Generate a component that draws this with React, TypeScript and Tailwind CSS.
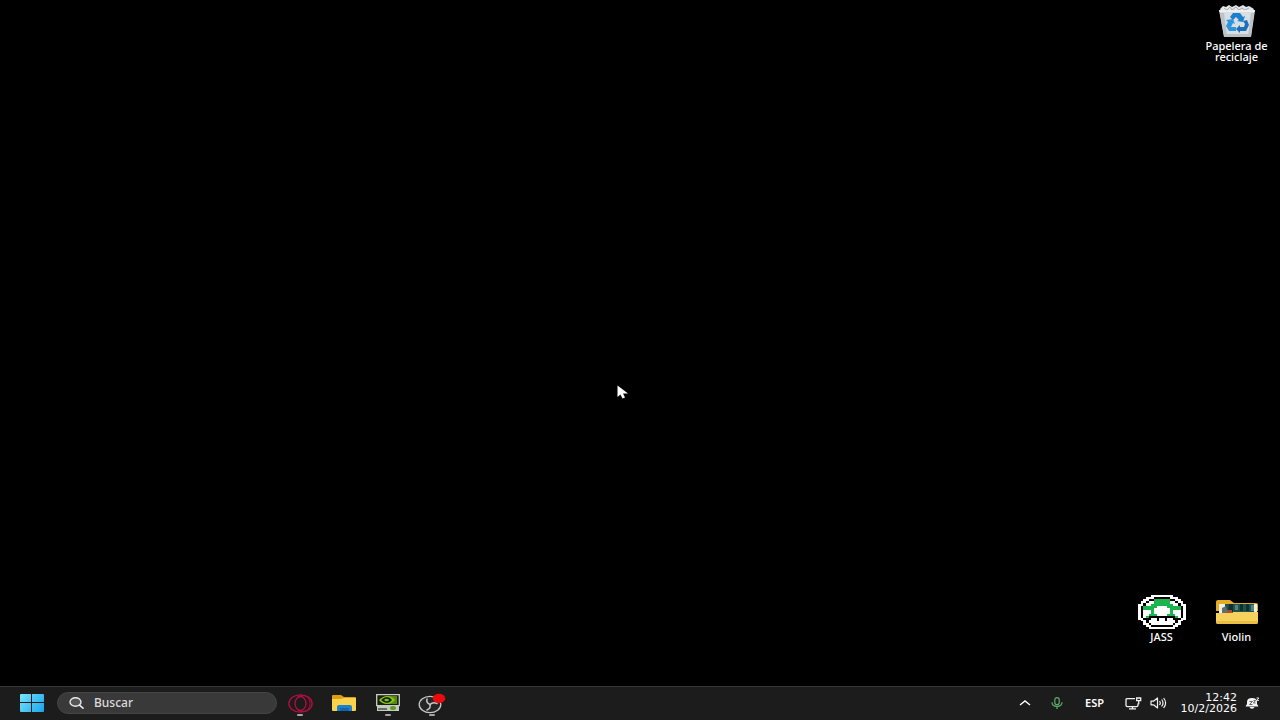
import React from "react";

const MUSHROOM = [
  ".....KKKKKK.....",
  "...KKGGGGGGKK...",
  "..KWWGGGGGGWWK..",
  ".KWWWGGGGGGWWWK.",
  ".KWWGGGGGGGGWWK.",
  "KGGGGGWWWWGGGGGK",
  "KGGGGWWWWWWGGGGK",
  "KWWWGWWWWWWGWWWK",
  "KWWWGWWWWWWGWWWK",
  "KWWGGGWWWWGGGWWK",
  "KWGKKKKKKKKKKGWK",
  ".KKKWWKWWKWWKKK.",
  "..KWWWKWWKWWWK..",
  "..KWWWWWWWWWWK..",
  "...KWWWWWWWWK...",
  "....KKKKKKKK....",
];

const FILL: Record<string, string> = { K: "#000", W: "#fff", G: "#1bb54e" };

function MushroomIcon() {
  const cells = MUSHROOM.flatMap((row, y) =>
    row.split("").map((c, x) => ({ c, x: x + 1, y: y + 1 })),
  ).filter((p) => p.c !== ".");
  return (
    <svg width="48" height="34" viewBox="0 0 18 18" preserveAspectRatio="none" shapeRendering="crispEdges">
      {cells.map((p) => (
        <rect key={`o${p.x}-${p.y}`} x={p.x - 1} y={p.y - 1} width="3" height="3" fill="#fff" />
      ))}
      {cells.map((p) => (
        <rect key={`c${p.x}-${p.y}`} x={p.x} y={p.y} width="1" height="1" fill={FILL[p.c]} />
      ))}
    </svg>
  );
}

function RecycleBinIcon() {
  return (
    <svg width="38" height="34" viewBox="0 0 38 34">
      <path d="M2 5 5 2l3 1 3-2 3 2 4-2 3 2 4-2 3 2 3-1 5 3-2 4H4Z" fill="#e4e7e9" />
      <path d="m6 4 3 2 3-3 2 3 4-3 3 3 3-2 3 2 4-2" fill="none" stroke="#a3aaae" />
      <path d="M1 6h36l-4 27H6Z" fill="#d9dee1" />
      <path d="M1 6h36l-.3 2H1.300Z" fill="#eceff0" />
      <path d="m2 9 4 23h3L6 9ZM36 9l-3 23h-3l3-23Z" fill="#bcc3c8" />
      <path d="M6 30h27v3H6Z" fill="#b9bfc3" />
      <path d="m12 13 3-4h7l3 4 2-1-2 6-6-1 2-1-3-3-3 3Z" fill="#1c7fcd" />
      <path d="m8 16 7-1 2 5-2-1-2 4h5v4h-7l-3-5 2-4Z" fill="#2f95de" />
      <path d="m25 17 4-1 2 5-3 6h-6v2l-4-4 4-4v2h4l1-3Z" fill="#1971ba" />
    </svg>
  );
}

function ViolinIcon() {
  return (
    <svg width="44" height="26" viewBox="0 0 44 26">
      <path d="M1 3q0-2 2-2h12l4 3h22q2 0 2 2v6H1Z" fill="#e5ac25" />
      <path d="M4 5h38v12H4Z" fill="#efefe6" />
      <path d="M10 5h29v8H10Z" fill="#20514d" />
      <path d="M20 6h3v5h-3ZM36 6h3v6h-3Z" fill="#4f8583" />
      <path d="M14 5h4v9h-5ZM25 5h3v7h-3ZM31 5h3v7h-3Z" fill="#10302d" />
      <path d="m7 9 4-2 1 4 2 3H7Z" fill="#5d6f72" />
      <path d="M12 11h5v3h-5Z" fill="#b3472d" />
      <path d="M1 14h15l4-1h23v10q0 2-2 2H3q-2 0-2-2Z" fill="#f6d15c" />
      <path d="M1 22h42v1q0 2-2 2H3q-2 0-2-2Z" fill="#eabd45" />
    </svg>
  );
}

function StartIcon() {
  return (
    <svg width="24" height="18" viewBox="0 0 24 18">
      <defs>
        <linearGradient id="win" x1="0" y1="0" x2="24" y2="18" gradientUnits="userSpaceOnUse">
          <stop offset="0" stopColor="#7ce4fb" />
          <stop offset="1" stopColor="#17a4ea" />
        </linearGradient>
      </defs>
      <path d="M0 1q0-1 1-1h10v8H0ZM12 0h11q1 0 1 1v7H12ZM0 9h11v9H1q-1 0-1-1ZM12 9h12v8q0 1-1 1H12Z" fill="url(#win)" />
    </svg>
  );
}

function SearchIcon() {
  return (
    <svg className="shrink-0" width="15" height="12" viewBox="0 0 15 12" fill="none" stroke="#e8e8e8">
      <ellipse cx="6.500" cy="5" rx="5.500" ry="4.300" strokeWidth="1.400" fill="#555" />
      <path d="m10.500 8.200 3.500 3" strokeWidth="1.600" strokeLinecap="round" />
    </svg>
  );
}

function OperaIcon() {
  return (
    <svg width="25" height="19" viewBox="0 0 25 19" fill="none" stroke="#b50d43" strokeWidth="1.300">
      <ellipse cx="12.500" cy="9.500" rx="11.600" ry="8.700" />
      <ellipse cx="12.500" cy="9.500" rx="5.500" ry="7" />
      <path d="M9 3.500Q12 .8 16 1.600c4 1 6 4.400 6 7.900s-2 7-6 7.900q-4 .8-7-1.900" strokeWidth=".9" />
    </svg>
  );
}

function ExplorerIcon() {
  return (
    <svg width="26" height="18" viewBox="0 0 26 18">
      <path d="M1 2q0-1 1-1h8l3 2h11q1 0 1 1v5H1Z" fill="#dc9e13" />
      <path d="M1 5h9l3-1h12v12q0 1-1 1H2q-1 0-1-1Z" fill="#fbd24b" />
      <path d="M6 17v-4q0-2 2-2h11q2 0 2 2v4Z" fill="#1b80cd" />
      <path d="M9 14h9v3H9Z" fill="#0f68ae" />
    </svg>
  );
}

function NvidiaIcon() {
  return (
    <svg width="24" height="18" viewBox="0 0 24 18">
      <path d="M.7.7h22.600v11H.7Z" fill="#18220f" stroke="#c9cdc7" strokeWidth="1.300" />
      <path d="M10 2h11v8H10Z" fill="#568b0e" />
      <path d="M3 6q4-4 8-4 5 0 8 4-4 4-8 4-5 0-8-4Z" fill="#8ac621" />
      <path d="M5 6q3-3 6-3t5 3q-2 3-5 3T5 6Z" fill="#162509" />
      <path d="M8 6q2-2 4-1 2 1 0 2-2 1-4-1Z" fill="#83c21c" />
      <path d="M1 12h22v5H1Z" fill="#c3cabf" />
      <path d="M2 14h9v2H2Z" fill="#677064" />
      <ellipse cx="17" cy="14" rx="3" ry="2" fill="#5b9d1f" />
    </svg>
  );
}

function ObsIcon() {
  return (
    <svg width="28" height="21" viewBox="0 0 28 21">
      <ellipse cx="12" cy="11.500" rx="10.800" ry="8.200" fill="#252526" stroke="#c8c8c8" strokeWidth="1.300" />
      <g fill="none" stroke="#c8c8c8" strokeWidth="1.500" strokeLinecap="round">
        <path d="M12 11.500Q8 10 9 6" />
        <path d="M12 11.500q3-3 7-1" />
        <path d="M12 11.500q1 4-3 5.500" />
      </g>
      <ellipse cx="21" cy="5.500" rx="6.300" ry="4.700" fill="#ea0b0e" />
    </svg>
  );
}

function ChevronIcon() {
  return (
    <svg width="12" height="6" viewBox="0 0 12 6" fill="none" stroke="#fff" strokeWidth="1.400">
      <path d="m1 5 5-4 5 4" />
    </svg>
  );
}

function MicIcon() {
  return (
    <svg width="12" height="12" viewBox="0 0 12 12" fill="none" stroke="#5fae68" strokeWidth="1.200">
      <rect x="3.800" y=".6" width="4.400" height="7" rx="2.200" />
      <path d="M1 5.200q0 4.200 5 4.200t5-4.200M6 9.400V12" />
    </svg>
  );
}

function NetworkIcon() {
  return (
    <svg width="17" height="13" viewBox="0 0 17 13" fill="none" stroke="#f2f2f2" strokeWidth="1.300">
      <path d="M10 1.600H2.500Q1 1.600 1 2.600v6q0 1 1.500 1h9q1.500 0 1.500-1V6.500M4 11.800h7M7.500 9.600v2.200" />
      <path d="M11.700 1h4v2.700h-4ZM13.700 3.700v3.500" />
    </svg>
  );
}

function SpeakerIcon() {
  return (
    <svg width="17" height="12" viewBox="0 0 17 12" fill="none" stroke="#f2f2f2" strokeWidth="1.200">
      <path d="M1 4.200h2.500L7.500 1v10l-4-3.200H1Z" strokeLinejoin="round" />
      <path d="M9.500 4q1.600 2 0 4M11.600 2.500q2.800 3.500 0 7M13.600 1q4 5 0 10" />
    </svg>
  );
}

function BellIcon() {
  return (
    <svg width="15" height="12" viewBox="0 0 15 12">
      <path d="M2 7V5q0-4 5-4 5 0 5 4v2l1.500 2.500H.500Z" fill="#f4f4f4" />
      <path d="M4.500 10h5q-.5 1.700-2.500 1.700T4.500 10Z" fill="#f4f4f4" />
      <path d="M4.500 4.500h3l-3 3h3" fill="none" stroke="#444" strokeWidth=".8" />
      <path d="M8.500 3.500h2L8.500 6h2" fill="none" stroke="#444" strokeWidth=".8" />
      <path d="M11.500 1h2.500l-2.500 2.400H14" fill="none" stroke="#f4f4f4" strokeWidth=".9" />
    </svg>
  );
}

function DesktopItem({ label, children }: { label: string; children: React.ReactNode }) {
  return (
    <button className="flex w-[75px] flex-col items-center gap-0.5 px-1 text-center text-[11px] leading-[11px] font-medium text-white">
      <span className="flex h-[34px] items-center">{children}</span>
      <span>{label}</span>
    </button>
  );
}

function TaskButton({ label, running, children }: { label: string; running?: boolean; children: React.ReactNode }) {
  return (
    <button aria-label={label} className="relative flex w-11 items-center justify-center">
      {children}
      {running && <span className="absolute bottom-[3px] h-0.5 w-1.5 rounded-full bg-[#a5a5a5]" />}
    </button>
  );
}

export default function App() {
  return (
    <div className="relative flex min-h-screen flex-col bg-black font-['Noto_Sans','DejaVu_Sans',sans-serif] text-white select-none">
      <main className="flex flex-1 flex-col items-end justify-between pt-1 pr-1.5 pb-11">
        <DesktopItem label="Papelera de reciclaje">
          <RecycleBinIcon />
        </DesktopItem>
        <div className="flex">
          <DesktopItem label="JASS">
            <MushroomIcon />
          </DesktopItem>
          <DesktopItem label="Violin">
            <ViolinIcon />
          </DesktopItem>
        </div>
      </main>

      <svg className="absolute top-[385px] left-[617px]" width="12" height="15" viewBox="0 0 12 15">
        <path d="M.5.5v11.500l3-2.500 2 4 2.500-1-2-4h5Z" fill="#fff" />
      </svg>

      <footer className="flex h-[34px] items-stretch justify-between border-t border-[#363636] bg-[#1c1c1c] pb-px">
        <div className="flex">
          <button aria-label="Inicio" className="flex items-center pr-[13px] pl-5">
            <StartIcon />
          </button>
          <label className="my-auto flex h-[22px] w-[220px] items-center gap-2.5 rounded-full border border-[#454545] bg-[#393939] pr-3 pl-[11px]">
            <SearchIcon />
            <input
              type="text"
              aria-label="Buscar"
              placeholder="Buscar"
              className="w-full min-w-0 bg-transparent text-xs font-medium text-white outline-none placeholder:text-[#dcdcdc]"
            />
          </label>
          <nav className="ml-px flex">
            <TaskButton label="Opera GX" running>
              <OperaIcon />
            </TaskButton>
            <TaskButton label="Explorador de archivos">
              <ExplorerIcon />
            </TaskButton>
            <TaskButton label="NVIDIA" running>
              <NvidiaIcon />
            </TaskButton>
            <TaskButton label="OBS Studio" running>
              <ObsIcon />
            </TaskButton>
          </nav>
        </div>

        <div className="flex pr-5">
          <button aria-label="Mostrar iconos ocultos" className="flex w-8 items-center justify-center">
            <ChevronIcon />
          </button>
          <button aria-label="Micrófono" className="flex w-8 items-center justify-center">
            <MicIcon />
          </button>
          <button className="w-11 text-center text-[11px] font-semibold">ESP</button>
          <button aria-label="Red y volumen" className="flex items-center gap-2 px-2">
            <NetworkIcon />
            <SpeakerIcon />
          </button>
          <button className="flex items-center gap-2 pl-1.5">
            <span className="text-right font-['DejaVu_Sans',sans-serif] text-[11px] leading-[11px]">
              12:42
              <br />
              10/2/2026
            </span>
            <BellIcon />
          </button>
        </div>
      </footer>
    </div>
  );
}
